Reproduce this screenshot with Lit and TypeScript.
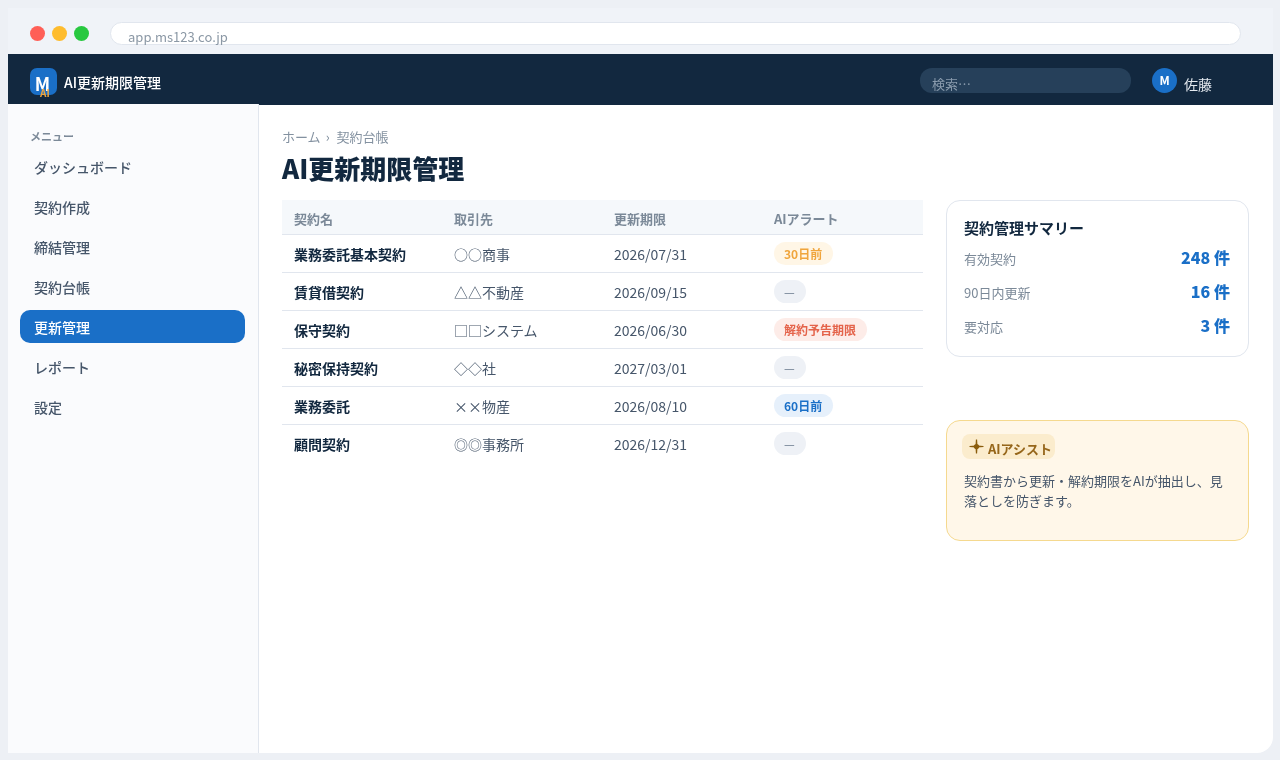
import { LitElement, html, css, type TemplateResult } from 'lit'
import { customElement } from 'lit/decorators.js'

interface Row {
  name: string
  partner: string
  date: string
  alert: string
  tone: string
}

const MENU = ['ダッシュボード', '契約作成', '締結管理', '契約台帳', '更新管理', 'レポート', '設定']

const ROWS: Row[] = [
  { name: '業務委託基本契約', partner: '○○商事', date: '2026/07/31', alert: '30日前', tone: 'warn' },
  { name: '賃貸借契約', partner: '△△不動産', date: '2026/09/15', alert: '—', tone: 'none' },
  { name: '保守契約', partner: '□□システム', date: '2026/06/30', alert: '解約予告期限', tone: 'danger' },
  { name: '秘密保持契約', partner: '◇◇社', date: '2027/03/01', alert: '—', tone: 'none' },
  { name: '業務委託', partner: '××物産', date: '2026/08/10', alert: '60日前', tone: 'info' },
  { name: '顧問契約', partner: '◎◎事務所', date: '2026/12/31', alert: '—', tone: 'none' }
]

const SUMMARY = [
  ['有効契約', '248 件'],
  ['90日内更新', '16 件'],
  ['要対応', '3 件']
]

@customElement('app-root')
export class AppRoot extends LitElement {
  static styles = css`
    :host {
      display: block;
      height: 760px;
      padding: 8px 7px 7px 8px;
      box-sizing: border-box;
      background: #edf0f5;
      font-family: "Noto Sans CJK JP", "Noto Sans", sans-serif;
      color: #12283f;
      overflow: hidden;
    }

    .window {
      height: 745px;
      display: flex;
      flex-direction: column;
      background: #fff;
      border-bottom-right-radius: 16px;
      overflow: hidden;
      will-change: transform;
    }

    .chrome {
      height: 46px;
      flex: none;
      display: flex;
      align-items: flex-start;
      background: #f0f3f8;
      padding: 14px 32px 0 22px;
      box-sizing: border-box;
    }

    .dots {
      display: flex;
      gap: 7px;
      padding-top: 4px;
      margin-right: 21px;
    }

    .dot {
      width: 15px;
      height: 15px;
      border-radius: 50%;
    }

    .red { background: #ff5f57; }
    .yellow { background: #febc2e; }
    .green { background: #28c840; }

    .url {
      flex: 1;
      height: 23px;
      box-sizing: border-box;
      background: #fff;
      border: 1px solid #e1e6ee;
      border-radius: 12px;
      padding: 6px 0 0 17px;
      font-size: 13px;
      line-height: 16px;
      color: #8b98a5;
    }

    .topbar {
      height: 51px;
      flex: none;
      display: flex;
      align-items: flex-start;
      background: #12283f;
      padding: 14px 61px 0 22px;
      box-sizing: border-box;
      color: #fff;
    }

    .logo {
      position: relative;
      width: 27px;
      height: 27px;
      padding-right: 2px;
      box-sizing: border-box;
      border-radius: 7px;
      background: #1a6fc7;
      text-align: center;
      font-size: 18px;
      font-weight: 700;
      line-height: 30px;
      margin-right: 7px;
    }

    .logo span {
      position: absolute;
      left: 10px;
      top: 19px;
      font-size: 10px;
      font-weight: 700;
      line-height: 11px;
      color: #f0a53c;
    }

    .app-name {
      font-size: 14px;
      line-height: 29px;
      font-weight: 500;
    }

    .search {
      width: 211px;
      height: 25px;
      margin-left: auto;
      border-radius: 12px;
      background: #26405a;
      padding: 5px 0 0 12px;
      box-sizing: border-box;
      font-size: 13px;
      line-height: 21px;
      color: #8b9cae;
    }

    .avatar {
      width: 25px;
      height: 25px;
      margin-left: 21px;
      border-radius: 50%;
      background: #1a6fc7;
      font-size: 12px;
      font-weight: 700;
      line-height: 24px;
      text-align: center;
    }

    .user {
      margin-left: 7px;
      padding-top: 5px;
      font-size: 14px;
      line-height: 22px;
      color: #e4e9ef;
    }

    .body {
      flex: 1;
      display: flex;
      min-height: 0;
    }

    .sidebar {
      position: relative;
      width: 251px;
      flex: none;
      margin-top: -1px;
      background: #fafbfd;
      border-right: 1px solid #e1e6ee;
      box-sizing: border-box;
      padding: 24px 13px 0 12px;
    }

    .menu-label {
      font-size: 11px;
      font-weight: 700;
      line-height: 16px;
      color: #7b8998;
      padding-left: 10px;
      margin-bottom: 6px;
    }

    .nav {
      display: flex;
      flex-direction: column;
      gap: 7px;
    }

    .nav-item {
      height: 33px;
      border-radius: 10px;
      padding-left: 14px;
      font-size: 14px;
      font-weight: 500;
      line-height: 35px;
      color: #46566a;
    }

    .nav-item.active {
      background: #1a6fc7;
      color: #fff;
    }

    .main {
      flex: 1;
      padding: 22px 24px 0 23px;
      min-width: 0;
    }

    .crumb {
      display: flex;
      gap: 5px;
      font-size: 13px;
      line-height: 20px;
      color: #8391a0;
    }

    .crumb span:last-child {
      margin-left: 2px;
    }

    .title {
      margin: 2px 0 13px;
      font-size: 26px;
      font-weight: 800;
      line-height: 38px;
      color: #12283f;
    }

    .columns {
      display: flex;
      align-items: flex-start;
      gap: 23px;
    }

    table {
      width: 641px;
      flex: none;
      border-collapse: collapse;
      table-layout: fixed;
    }

    th {
      height: 34px;
      padding: 4px 12px 0;
      background: #f5f8fb;
      border-bottom: 1px solid #e1e6ee;
      box-sizing: border-box;
      text-align: left;
      font-size: 13px;
      font-weight: 700;
      color: #7b8998;
    }

    td {
      height: 38px;
      padding: 2px 12px 0;
      border-bottom: 1px solid #e1e6ee;
      box-sizing: border-box;
      font-size: 14px;
      color: #46566a;
    }

    tr:last-child td {
      border-bottom: none;
    }

    td.name {
      font-weight: 700;
      color: #12283f;
    }

    .col { width: 160px; }

    .pill {
      display: inline-block;
      height: 23px;
      position: relative;
      top: -1px;
      padding: 0 11px 0 10px;
      border-radius: 12px;
      font-size: 12px;
      font-weight: 700;
      line-height: 24px;
    }

    .pill.warn { background: #fff6e6; color: #f0a53c; }
    .pill.danger { background: #fdece8; color: #e4634a; }
    .pill.info { background: #e6f0fb; color: #1a6fc7; }
    .pill.none { background: #eef1f6; color: #66768a; font-weight: 400; }

    .side {
      width: 303px;
      flex: none;
      display: flex;
      flex-direction: column;
      gap: 63px;
    }

    .summary {
      height: 157px;
      box-sizing: border-box;
      padding: 16px 18px 0 17px;
      background: #fff;
      border: 1px solid #e1e6ee;
      border-radius: 14px;
    }

    .summary h2 {
      margin: 0 0 1px;
      font-size: 15px;
      font-weight: 700;
      line-height: 22px;
      color: #12283f;
    }

    .stat {
      height: 34px;
      display: flex;
      justify-content: space-between;
      align-items: center;
    }

    .stat-label {
      font-size: 13px;
      color: #7b8998;
      padding-top: 2px;
    }

    .stat-value {
      font-size: 16px;
      font-weight: 800;
      color: #1a6fc7;
    }

    .assist {
      height: 121px;
      box-sizing: border-box;
      padding: 13px 15px 0 15px;
      background: #fff7e9;
      border: 1px solid #f5d98f;
      border-radius: 14px;
    }

    .assist-badge {
      display: inline-flex;
      align-items: center;
      gap: 4px;
      height: 25px;
      padding: 0 3px 0 7px;
      border-radius: 8px;
      background: #fbeccd;
      font-size: 13px;
      font-weight: 700;
      color: #96661a;
    }

    .assist-badge span {
      padding-top: 3px;
    }

    .assist p {
      margin: 12px 0 0 2px;
      font-size: 13px;
      line-height: 20px;
      color: #46566a;
    }
  `

  render (): TemplateResult {
    return html`
      <div class="window">
        <div class="chrome">
          <div class="dots">
            <div class="dot red"></div>
            <div class="dot yellow"></div>
            <div class="dot green"></div>
          </div>
          <div class="url">app.ms123.co.jp</div>
        </div>
        <div class="topbar">
          <div class="logo">M<span>AI</span></div>
          <div class="app-name">AI更新期限管理</div>
          <div class="search">検索…</div>
          <div class="avatar">M</div>
          <div class="user">佐藤</div>
        </div>
        <div class="body">
          <div class="sidebar">
            <div class="menu-label">メニュー</div>
            <div class="nav">
              ${MENU.map(item => html`<div class="nav-item ${item === '更新管理' ? 'active' : ''}">${item}</div>`)}
            </div>
          </div>
          <div class="main">
            <div class="crumb"><span>ホーム</span><span>›</span><span>契約台帳</span></div>
            <h1 class="title">AI更新期限管理</h1>
            <div class="columns">
              <table>
                <thead>
                  <tr>
                    <th class="col">契約名</th>
                    <th class="col">取引先</th>
                    <th class="col">更新期限</th>
                    <th>AIアラート</th>
                  </tr>
                </thead>
                <tbody>
                  ${ROWS.map(row => html`
                    <tr>
                      <td class="name">${row.name}</td>
                      <td>${row.partner}</td>
                      <td>${row.date}</td>
                      <td><span class="pill ${row.tone}">${row.alert}</span></td>
                    </tr>
                  `)}
                </tbody>
              </table>
              <div class="side">
                <div class="summary">
                  <h2>契約管理サマリー</h2>
                  ${SUMMARY.map(([label, value]) => html`
                    <div class="stat">
                      <span class="stat-label">${label}</span>
                      <span class="stat-value">${value}</span>
                    </div>
                  `)}
                </div>
                <div class="assist">
                  <div class="assist-badge">
                    <svg width="15" height="15" viewBox="0 0 15 15">
                      <path d="M6.9 0.5 H8.1 L8.5 6.5 L14.5 6.9 V8.1 L8.5 8.5 L8.1 14.5 H6.9 L6.5 8.5 L0.5 8.1 V6.9 L6.5 6.5 Z" fill="#8a5c0c"></path>
                      <circle cx="7.5" cy="7.5" r="2.6" fill="#8a5c0c"></circle>
                    </svg>
                    <span>AIアシスト</span>
                  </div>
                  <p>契約書から更新・解約期限をAIが抽出し、見落としを防ぎます。</p>
                </div>
              </div>
            </div>
          </div>
        </div>
      </div>
    `
  }
}
